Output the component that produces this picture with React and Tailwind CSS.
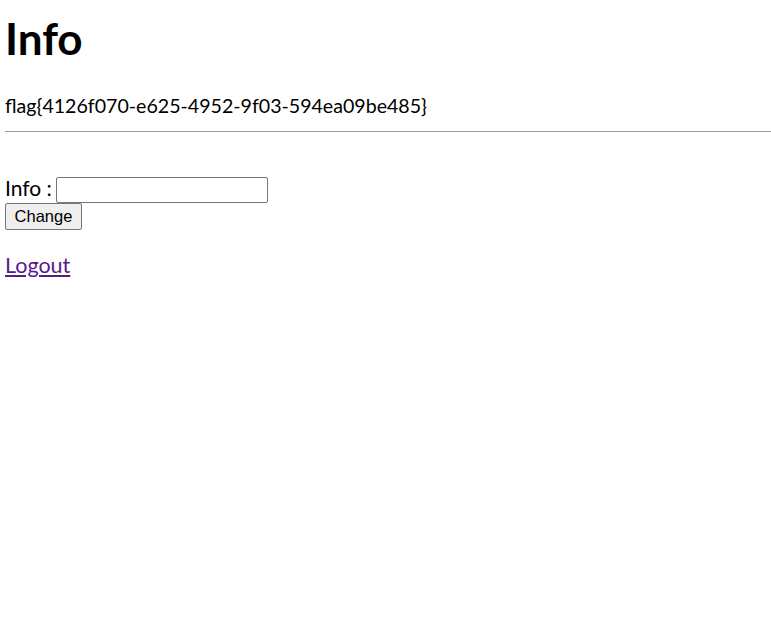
import React from "react";

const App = () => {
  return (
    <div className="min-h-[618px] bg-white pl-[5px] text-black" style={{ fontFamily: "Lato, 'Noto Sans', sans-serif" }}>
      <h1 className="pt-[12px] text-[44px] font-bold leading-[52px]">Info</h1>
      <p className="mt-[28px] text-[19.6px] leading-[28px]">flag{"{"}4126f070-e625-4952-9f03-594ea09be485{"}"}</p>
      <hr className="mt-[11px] border-t border-[#9a9a9a]" />
      <div className="mt-[45px] flex items-center">
        <span className="-mt-[4px] text-[21px] leading-[26px]">Info :</span>
        <input
          type="text"
          className="ml-[4px] h-[26px] w-[212px] rounded-[2px] border border-[#767676] bg-white"
        />
      </div>
      <button
        className="h-[27px] w-[77px] rounded-[2px] border border-[#767676] bg-[#efefef] text-[16.5px]"
        style={{ fontFamily: "'Liberation Sans', Arial, sans-serif" }}
      >
        Change
      </button>
      <p className="mt-[21px] text-[21.5px] leading-[28px]">
        <a href="#" className="text-[#551a8b] underline">Logout</a>
      </p>
    </div>
  );
};

export default App;
